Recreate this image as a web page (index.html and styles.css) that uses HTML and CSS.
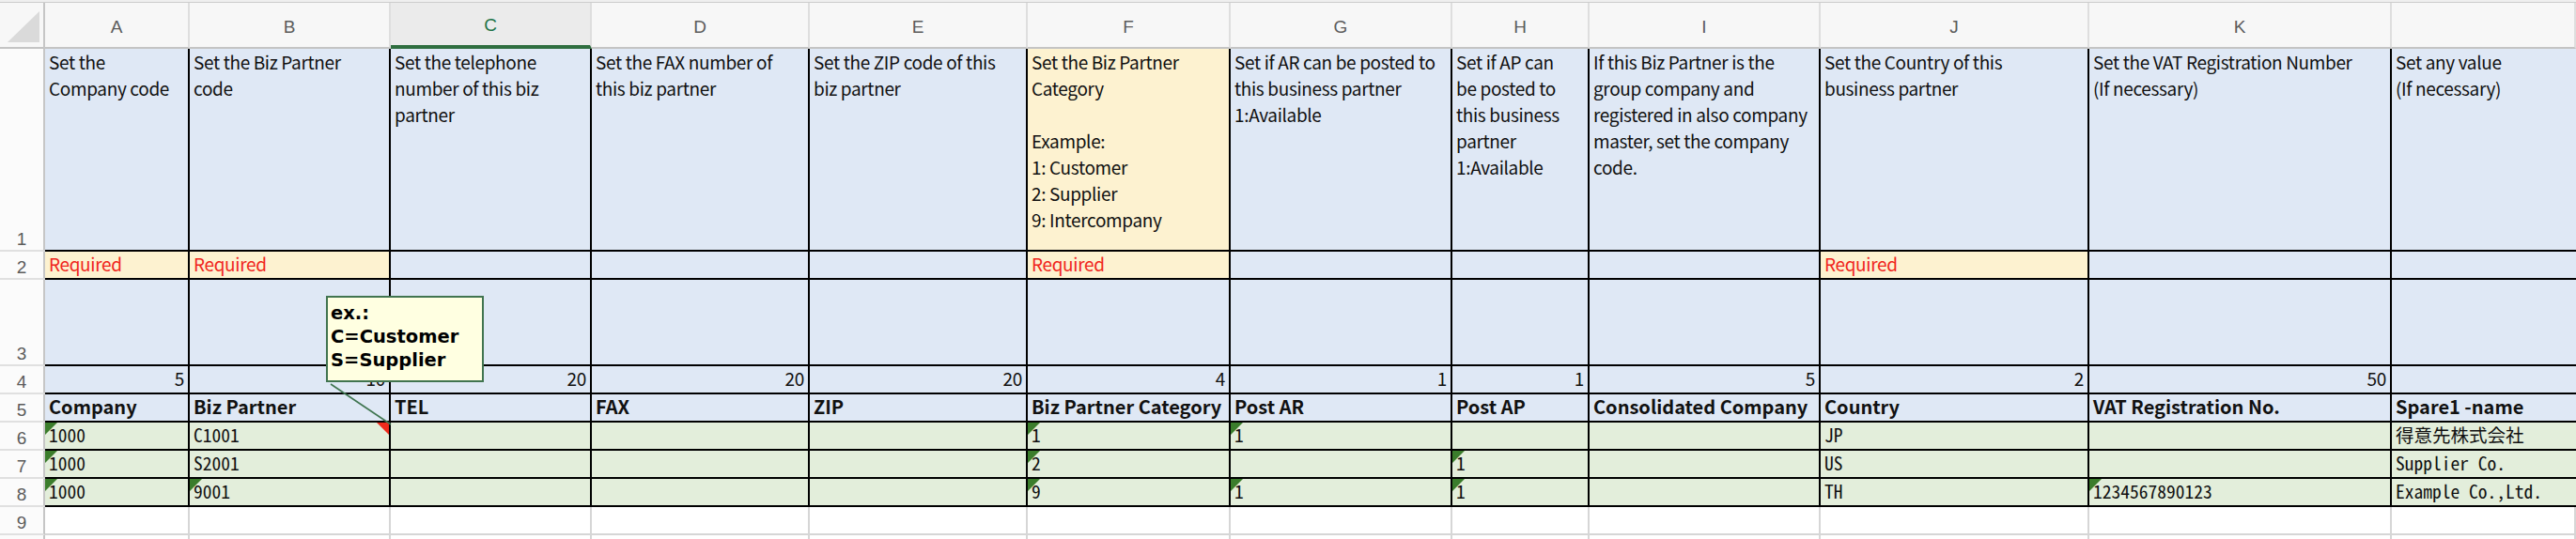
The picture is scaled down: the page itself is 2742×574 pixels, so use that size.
FILE: index.html
```html
<!DOCTYPE html>
<html lang="en">
<head>
<meta charset="utf-8">
<title>Biz Partner master – import sheet</title>
<link rel="stylesheet" href="styles.css">
</head>
<body>
<div class="window">
  <div class="sheet">
    <!-- column header row -->
    <div class="corner"><span class="corner-tri"></span></div>
    <div class="ch">A</div>
    <div class="ch">B</div>
    <div class="ch ch-sel">C</div>
    <div class="ch">D</div>
    <div class="ch">E</div>
    <div class="ch">F</div>
    <div class="ch">G</div>
    <div class="ch">H</div>
    <div class="ch">I</div>
    <div class="ch">J</div>
    <div class="ch">K</div>
    <div class="ch"></div>

    <!-- row 1: descriptions -->
    <div class="rh">1</div>
    <div class="c blue desc">Set the<br>Company code</div>
    <div class="c blue desc">Set the Biz Partner<br>code</div>
    <div class="c blue desc">Set the telephone<br>number of this biz<br>partner</div>
    <div class="c blue desc">Set the FAX number of<br>this biz partner</div>
    <div class="c blue desc">Set the ZIP code of this<br>biz partner</div>
    <div class="c yellow desc">Set the Biz Partner<br>Category<br><br>Example:<br>1: Customer<br>2: Supplier<br>9: Intercompany</div>
    <div class="c blue desc">Set if AR can be posted to<br>this business partner<br>1:Available</div>
    <div class="c blue desc">Set if AP can<br>be posted to<br>this business<br>partner<br>1:Available</div>
    <div class="c blue desc">If this Biz Partner is the<br>group company and<br>registered in also company<br>master, set the company<br>code.</div>
    <div class="c blue desc">Set the Country of this<br>business partner</div>
    <div class="c blue desc">Set the VAT Registration Number<br>(If necessary)</div>
    <div class="c blue desc last">Set any value<br>(If necessary)</div>

    <!-- row 2: required -->
    <div class="rh">2</div>
    <div class="c yellow req">Required</div>
    <div class="c yellow req">Required</div>
    <div class="c blue"></div>
    <div class="c blue"></div>
    <div class="c blue"></div>
    <div class="c yellow req">Required</div>
    <div class="c blue"></div>
    <div class="c blue"></div>
    <div class="c blue"></div>
    <div class="c yellow req">Required</div>
    <div class="c blue"></div>
    <div class="c blue last"></div>

    <!-- row 3 -->
    <div class="rh">3</div>
    <div class="c blue"></div>
    <div class="c blue"></div>
    <div class="c blue"></div>
    <div class="c blue"></div>
    <div class="c blue"></div>
    <div class="c blue"></div>
    <div class="c blue"></div>
    <div class="c blue"></div>
    <div class="c blue"></div>
    <div class="c blue"></div>
    <div class="c blue"></div>
    <div class="c blue last"></div>

    <!-- row 4: lengths -->
    <div class="rh">4</div>
    <div class="c blue num">5</div>
    <div class="c blue num">10</div>
    <div class="c blue num">20</div>
    <div class="c blue num">20</div>
    <div class="c blue num">20</div>
    <div class="c blue num">4</div>
    <div class="c blue num">1</div>
    <div class="c blue num">1</div>
    <div class="c blue num">5</div>
    <div class="c blue num">2</div>
    <div class="c blue num">50</div>
    <div class="c blue num last"></div>

    <!-- row 5: field names -->
    <div class="rh">5</div>
    <div class="c blue hdr">Company</div>
    <div class="c blue hdr">Biz Partner</div>
    <div class="c blue hdr">TEL</div>
    <div class="c blue hdr">FAX</div>
    <div class="c blue hdr">ZIP</div>
    <div class="c blue hdr">Biz Partner Category</div>
    <div class="c blue hdr">Post AR</div>
    <div class="c blue hdr">Post AP</div>
    <div class="c blue hdr">Consolidated Company</div>
    <div class="c blue hdr">Country</div>
    <div class="c blue hdr">VAT Registration No.</div>
    <div class="c blue hdr last">Spare1 -name</div>

    <!-- row 6 -->
    <div class="rh">6</div>
    <div class="c green data tri">1000</div>
    <div class="c green data note">C1001</div>
    <div class="c green data"></div>
    <div class="c green data"></div>
    <div class="c green data"></div>
    <div class="c green data tri">1</div>
    <div class="c green data tri">1</div>
    <div class="c green data"></div>
    <div class="c green data"></div>
    <div class="c green data">JP</div>
    <div class="c green data"></div>
    <div class="c green data last">得意先株式会社</div>

    <!-- row 7 -->
    <div class="rh">7</div>
    <div class="c green data tri">1000</div>
    <div class="c green data">S2001</div>
    <div class="c green data"></div>
    <div class="c green data"></div>
    <div class="c green data"></div>
    <div class="c green data tri">2</div>
    <div class="c green data"></div>
    <div class="c green data tri">1</div>
    <div class="c green data"></div>
    <div class="c green data">US</div>
    <div class="c green data"></div>
    <div class="c green data last">Supplier Co.</div>

    <!-- row 8 -->
    <div class="rh">8</div>
    <div class="c green data tri">1000</div>
    <div class="c green data tri">9001</div>
    <div class="c green data"></div>
    <div class="c green data"></div>
    <div class="c green data"></div>
    <div class="c green data tri">9</div>
    <div class="c green data tri">1</div>
    <div class="c green data tri">1</div>
    <div class="c green data"></div>
    <div class="c green data">TH</div>
    <div class="c green data tri">1234567890123</div>
    <div class="c green data last">Example Co.,Ltd.</div>

    <!-- row 9 -->
    <div class="rh">9</div>
    <div class="e"></div><div class="e"></div><div class="e"></div><div class="e"></div>
    <div class="e"></div><div class="e"></div><div class="e"></div><div class="e"></div>
    <div class="e"></div><div class="e"></div><div class="e"></div><div class="e"></div>

    <!-- row 10 (cut off by the window) -->
    <div class="rh"></div>
    <div class="e"></div><div class="e"></div><div class="e"></div><div class="e"></div>
    <div class="e"></div><div class="e"></div><div class="e"></div><div class="e"></div>
    <div class="e"></div><div class="e"></div><div class="e"></div><div class="e"></div>
  </div>

  <div class="comment">ex.:<br>C=Customer<br>S=Supplier</div>
  <svg class="leader" width="2742" height="574" viewBox="0 0 2742 574" aria-hidden="true">
    <line x1="352" y1="409" x2="416" y2="452" stroke="#3f7550" stroke-width="1.6"/>
  </svg>
</div>
</body>
</html>
```

FILE: styles.css
```css
html, body {
  margin: 0;
  padding: 0;
  overflow: hidden;
  background: #ffffff;
}

.window {
  position: relative;
  width: 2742px;
  height: 574px;
  overflow: hidden;
  border-top: 2px solid #efefef;
  box-sizing: border-box;
  font-family: "Noto Sans CJK JP", "Noto Sans", sans-serif;
  color: #111;
}

.sheet {
  display: grid;
  grid-template-columns: 48px 154px 214px 214px 232px 232px 216px 236px 146px 246px 286px 322px 196px;
  grid-template-rows: 49px 216px 30px 92px 30px 30px 30px 30px 30px 30px 30px;
  border-top: 1px solid #cdcdcd;
  width: max-content;
}

/* ---------- headers ---------- */
.corner {
  background: #f7f7f7;
  border-right: 2px solid #c6c6c6;
  border-bottom: 2px solid #c4c4c4;
  display: flex;
  align-items: flex-end;
  justify-content: flex-end;
  padding: 0 4px 5px 0;
  box-sizing: border-box;
}
.corner-tri {
  width: 0;
  height: 0;
  border-left: 34px solid transparent;
  border-bottom: 33px solid #dadada;
}

.ch {
  background: #f7f7f7;
  border-right: 2px solid #dedede;
  border-bottom: 2px solid #c4c4c4;
  box-sizing: border-box;
  display: flex;
  align-items: center;
  justify-content: center;
  padding-top: 4px;
  font-family: "Liberation Sans", Arial, sans-serif;
  font-size: 19px;
  line-height: 19px;
  color: #5c5c5c;
}
.ch-sel {
  background: #ebebeb;
  color: #217346;
  border-bottom: 4px solid #2f6e3f;
  padding-top: 2px;
}

.rh {
  background: #fbfbfb;
  border-right: 2px solid #c6c6c6;
  border-bottom: 2px solid #e0e0e0;
  box-sizing: border-box;
  display: flex;
  align-items: flex-end;
  justify-content: center;
  padding-bottom: 2px;
  font-family: "Liberation Sans", Arial, sans-serif;
  font-size: 19px;
  line-height: 19px;
  color: #5c5c5c;
}

/* ---------- cells ---------- */
.c {
  position: relative;
  box-sizing: border-box;
  border-right: 2px solid #000;
  border-bottom: 2px solid #000;
  display: flex;
  align-items: flex-end;
  padding: 0 4px 5px 4px;
  white-space: nowrap;
  font-size: 19px;
  letter-spacing: -0.35px;
  line-height: 20px;
}
.c.last { border-right: 0; }

.blue   { background: #dfe8f5; }
.yellow { background: #fdf2d0; }
.green  { background: #e3eedb; }

.desc {
  display: block;
  padding-top: 0;
  line-height: 28px;
}

.req { color: #f0261c; }

.num { justify-content: flex-end; }

.hdr {
  font-weight: 700;
  font-size: 20px;
  letter-spacing: 0;
}

.data {
  font-family: "Noto Sans Mono CJK JP", "DejaVu Sans Mono", monospace;
  font-size: 19.5px;
  letter-spacing: 0;
}

.tri::before {
  content: "";
  position: absolute;
  left: 0;
  top: 0;
  width: 0;
  height: 0;
  border-top: 13px solid #3b7d2c;
  border-right: 13px solid transparent;
}

.note::after {
  content: "";
  position: absolute;
  right: 0;
  top: 0;
  width: 0;
  height: 0;
  border-top: 13px solid #ee2b1c;
  border-left: 13px solid transparent;
}

.e {
  background: #fff;
  box-sizing: border-box;
  border-right: 2px solid #d6d6d6;
  border-bottom: 2px solid #d6d6d6;
}

/* ---------- comment overlay ---------- */
.comment {
  position: absolute;
  left: 347px;
  top: 313px;
  width: 168px;
  height: 92px;
  box-sizing: border-box;
  border: 2px solid #41744f;
  background: #ffffe1;
  padding: 4px 3px;
  font-family: "DejaVu Sans", Verdana, sans-serif;
  font-weight: 700;
  font-size: 19.5px;
  line-height: 25px;
  color: #000;
  white-space: nowrap;
  z-index: 2;
}

.leader {
  position: absolute;
  left: 0;
  top: -2px;
  z-index: 3;
  pointer-events: none;
}
```
